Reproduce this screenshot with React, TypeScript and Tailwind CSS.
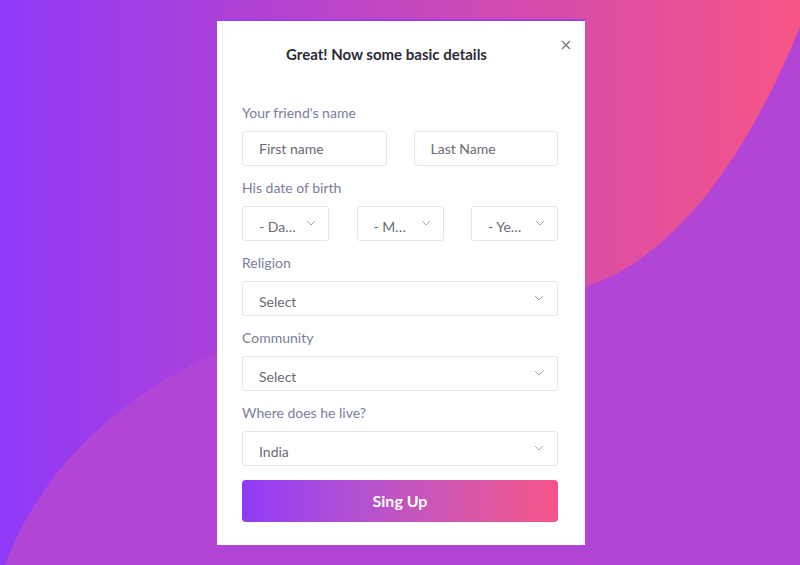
import React from "react";

const font = { fontFamily: "Lato, 'Open Sans', sans-serif" };

function Chevron() {
  return (
    <svg width="10" height="6" viewBox="0 0 10 6" fill="none" className="shrink-0">
      <path d="M1 1l4 4 4-4" stroke="#a3a3b8" strokeWidth="1" />
    </svg>
  );
}

function Label({ children }: { children: React.ReactNode }) {
  return <div className="h-5 leading-5 text-[14px] text-[#7b7d9c] mb-2">{children}</div>;
}

function Field({ text }: { text: string }) {
  return (
    <div className="h-[35px] flex-1 flex items-center px-4 border border-[#e4e5ef] rounded-[3px] text-[14px] text-[#6a6a76]">
      {text}
    </div>
  );
}

function Dropdown({ text, small }: { text: string; small?: boolean }) {
  return (
    <div
      className={`h-[35px] flex items-center justify-between pl-4 border border-[#e4e5ef] rounded-[3px] text-[14px] text-[#6a6a76] ${
        small ? "w-[87px] pr-3" : "w-full pr-[13px]"
      }`}
    >
      <span className="pt-[5px]">{text}</span>
      <span className="-mt-[2px]">
        <Chevron />
      </span>
    </div>
  );
}

export default function App() {
  return (
    <div className="relative w-[800px] h-[565px] overflow-hidden bg-[#b145d6]" style={font}>
      <svg className="absolute inset-0" width="800" height="565" viewBox="0 0 800 565">
        <defs>
          <linearGradient id="bg" x1="0" y1="0" x2="800" y2="0" gradientUnits="userSpaceOnUse">
            <stop offset="0" stopColor="#8f39f8" />
            <stop offset="1" stopColor="#f75586" />
          </linearGradient>
        </defs>
        <path
          d="M0 0H800V27C770 100 700 250 585 287C480 315 320 320 217 353C120 395 40 470 5 565H0Z"
          fill="url(#bg)"
        />
      </svg>

      <div className="relative flex justify-center pt-[19px] pl-[2px]">
        <div className="w-[368px] h-[526px] bg-white border-t-2 border-[#9f3ceb] pl-[25px] pr-[27px]">
          <div className="relative pt-[23px] h-[82px]">
            <div className="text-center font-bold text-[15px] leading-5 text-[#2b2b38] pr-[27px]">
              Great! Now some basic details
            </div>
            <button className="absolute right-[-16px] top-[16px] w-4 h-4 flex items-center justify-center">
              <svg width="10" height="10" viewBox="0 0 10 10">
                <path d="M1 1l8 8M9 1l-8 8" stroke="#7a7a7a" strokeWidth="1.4" />
              </svg>
            </button>
          </div>

          <div className="flex flex-col gap-3">
            <div>
              <Label>Your friend's name</Label>
              <div className="flex gap-[27px]">
                <Field text="First name" />
                <Field text="Last Name" />
              </div>
            </div>
            <div>
              <Label>His date of birth</Label>
              <div className="flex justify-between">
                <Dropdown text="- Da…" small />
                <Dropdown text="- M…" small />
                <Dropdown text="- Ye…" small />
              </div>
            </div>
            <div>
              <Label>Religion</Label>
              <Dropdown text="Select" />
            </div>
            <div>
              <Label>Community</Label>
              <Dropdown text="Select" />
            </div>
            <div>
              <Label>Where does he live?</Label>
              <Dropdown text="India" />
            </div>
          </div>

          <button className="mt-[14px] w-full h-[42px] rounded-[4px] bg-gradient-to-r from-[#9039f7] to-[#f65486] text-white font-bold text-[16px]">
            Sing Up
          </button>
        </div>
      </div>
    </div>
  );
}
